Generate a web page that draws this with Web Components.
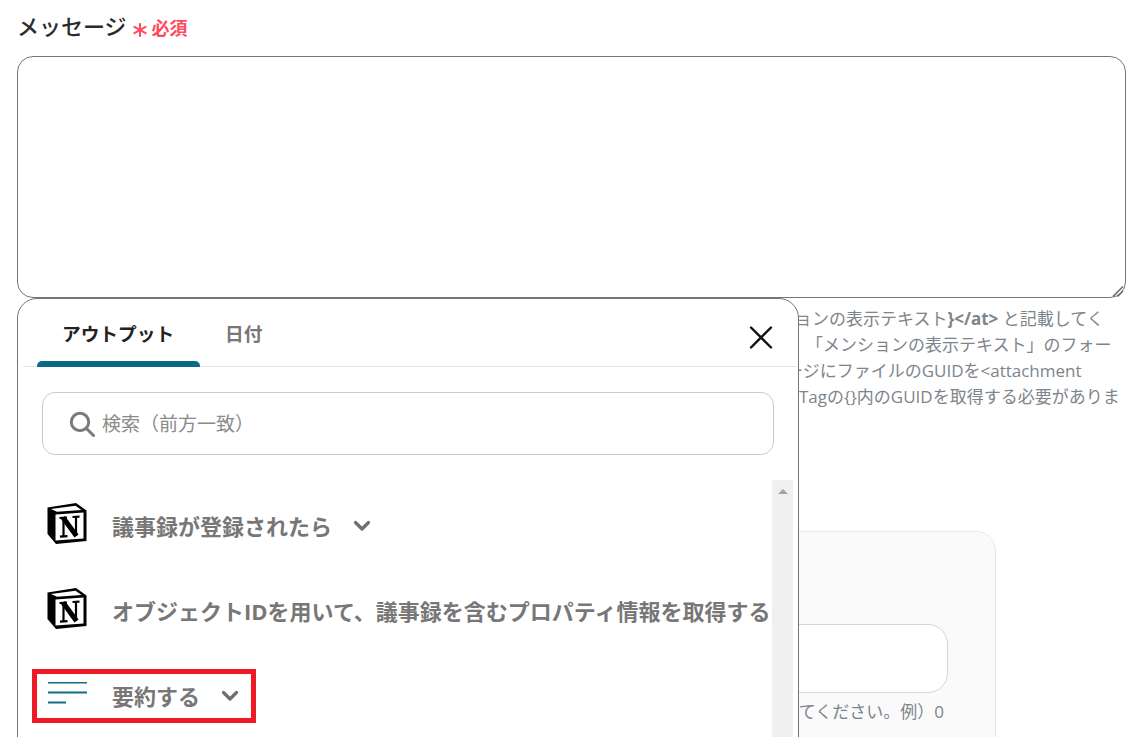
<!DOCTYPE html>
<html lang="ja"><head><meta charset="utf-8">
<style>
html,body{margin:0;height:100%;overflow:hidden;background:#fff}
body{font-family:"Open Sans","Noto Sans CJK JP",sans-serif}
</style></head>
<body>
<form-page>
  <field-label slot="label">メッセージ</field-label>
  <message-box slot="box"></message-box>
  <help-note slot="help">
    <span style="margin-left:795px">ョンの表示テキスト<b>}&lt;/at&gt; </b>と記載してく</span>
    <span style="margin-left:806px">「メンションの表示テキスト」のフォー</span>
    <span style="margin-left:786px">ージにファイルのGUIDを&lt;attachment</span>
    <span style="margin-left:799px">Tagの{}内のGUIDを取得する必要がありま</span>
  </help-note>
  <number-card slot="card"></number-card>
  <output-popup slot="popup">
    <output-row><notion-logo slot="icon"></notion-logo>議事録が登録されたら<chev-icon slot="chev"></chev-icon></output-row>
    <output-row><notion-logo slot="icon"></notion-logo>オブジェクトIDを用いて、議事録を含むプロパティ情報を取得する</output-row>
    <output-row marked><lines-icon slot="icon"></lines-icon>要約する<chev-icon slot="chev"></chev-icon></output-row>
  </output-popup>
</form-page>
<script>
function def(name, html){
  customElements.define(name, class extends HTMLElement{
    constructor(){super();this.attachShadow({mode:'open'}).innerHTML=html;}
  });
}
const FONT='"Open Sans","Noto Sans CJK JP",sans-serif';
def('form-page',`<style>
:host{display:block;position:relative;height:737px;overflow:hidden;font-family:${FONT}}
.wrap{display:flex;flex-direction:column;padding:11px 15px 0 17px}
</style><div class="wrap"><slot name="label"></slot><slot name="box"></slot><slot name="help"></slot><slot name="card"></slot></div><slot name="popup"></slot>`);
def('field-label',`<style>
:host{display:flex;align-items:center;height:31px;margin-bottom:14px;font-size:22px;font-weight:500;color:#2b2b2b;line-height:31px}
.req{display:flex;align-items:center;color:#ff4b60;font-size:18px;font-weight:700;margin-left:6px;padding-top:3px}
.req svg{margin-right:5px;margin-top:4px}
</style><slot></slot><span class="req"><svg width="14" height="14" viewBox="0 0 15 15"><g stroke="#ff4b60" stroke-width="2.2" stroke-linecap="round"><line x1="7.5" y1="1" x2="7.5" y2="14"/><line x1="1.5" y1="4.2" x2="13.5" y2="10.8"/><line x1="13.5" y1="4.2" x2="1.5" y2="10.8"/></g></svg>必須</span>`);
def('message-box',`<style>
:host{display:block;position:relative;box-sizing:border-box;height:242px;width:1109px;border:1px solid #757575;border-radius:16px;background:#fff}
svg{position:absolute;right:1px;bottom:0}
</style><svg width="13" height="12" viewBox="0 0 13 12"><g stroke="#6a6a6a" fill="none"><line x1="2" y1="11.5" x2="12" y2="1.5" stroke-width="1.6"/><line x1="6.5" y1="11.5" x2="12" y2="6" stroke-width="1.6"/></g></svg>`);
def('help-note',`<style>
:host{display:block;margin:8px 0 0 -17px;font-size:17px;line-height:26px;color:#7d858c;white-space:nowrap}
::slotted(span){display:block}
::slotted(span) {font-weight:400}
</style><slot></slot>`);
def('number-card',`<style>
:host{display:block;box-sizing:border-box;position:relative;margin:121px 0 0 1px;width:978px;height:400px;background:#fafafa;border:1px solid #e9e9ec;border-radius:20px}
.input{box-sizing:border-box;margin:92px 0 0 100px;width:829px;height:69px;background:#fff;border:1px solid #d4d5dc;border-radius:20px}
.hint{font-size:17px;line-height:24px;color:#7d858c;text-align:right;width:925px;margin-top:7px;white-space:nowrap}
</style><div class="input"></div><div class="hint">てください。例）0</div>`);
def('output-popup',`<style>
:host{display:block;position:absolute;left:17px;top:298px;width:782px;height:520px;box-sizing:border-box;background:#fff;border:1px solid #757575;border-radius:20px;overflow:hidden}
.tabs{display:flex;height:68px;box-sizing:border-box;margin:0 1px 0 5px;border-bottom:1px solid #e6e6e6;padding-left:14px;position:relative}
.tab{box-sizing:border-box;height:68px;padding:20px 25px 0;width:163px;font-size:18.7px;line-height:30px;font-weight:700;color:#222;position:relative}
.tab.on::after{content:"";position:absolute;left:0;right:0;bottom:0;height:6px;background:#0a6a85;border-radius:5px 5px 0 0}
.tab.off{width:auto;color:#777}
.close{position:absolute;right:24px;top:27px;width:24px;height:24px}
.search{box-sizing:border-box;margin:25px 24px 0 24px;height:63px;border:1px solid #cbcbcb;border-radius:13px;display:flex;align-items:center;padding-left:26px;color:#8a8a8a;font-size:19px;gap:7px}
.search span{margin-top:-1px}
.list{position:relative;margin-top:25px;height:400px;padding-top:2px}
.sb{position:absolute;left:754px;top:0;width:21px;height:400px;background:#f0f0f0}
.sb i{position:absolute;left:6px;top:9px;width:0;height:0;border:5px solid transparent;border-top:0;border-bottom:5px solid #a3a3a3}
</style>
<div class="tabs"><div class="tab on">アウトプット</div><div class="tab off">日付</div>
<svg class="close" viewBox="0 0 24 24"><g stroke="#111" stroke-width="2.4" stroke-linecap="round"><line x1="2" y1="1.5" x2="22" y2="21.5"/><line x1="22" y1="1.5" x2="2" y2="21.5"/></g></svg></div>
<div class="search"><svg width="26" height="26" viewBox="0 0 26 26" fill="none" stroke="#7a7a7a" stroke-width="3"><circle cx="11" cy="11" r="8.7"/><line x1="17.5" y1="17.5" x2="24.5" y2="24.5" stroke-linecap="round"/></svg><span>検索（前方一致）</span></div>
<div class="list"><slot></slot><div class="sb"><i></i></div></div>`);
def('output-row',`<style>
:host{display:flex;align-items:center;height:85px;padding-left:29px;font-size:22px;font-weight:700;color:#777;white-space:nowrap;position:relative;box-sizing:border-box}
:host([marked])::after{content:"";position:absolute;left:14px;top:17px;width:224px;height:54px;box-sizing:border-box;border:5px solid #ed1c24}
.ic{display:flex;width:65px;flex:none;margin-top:-3px}
.c{display:flex;margin-left:21px;margin-top:2px}
:host([marked]) .ic{margin-top:-4px}
</style><span class="ic"><slot name="icon"></slot></span><slot></slot><span class="c"><slot name="chev"></slot></span>`);
def('chev-icon',`<style>:host{display:block;height:12px}svg{display:block}</style><svg width="18" height="12" viewBox="0 0 18 12" fill="none" stroke="#6f6f6f" stroke-width="3.2" stroke-linecap="round" stroke-linejoin="round"><polyline points="2.5,2.5 9,9 15.5,2.5"/></svg>`);
def('notion-logo',`<style>:host{display:block;width:40px;height:41px}svg{display:block}</style><svg width="40" height="41" viewBox="0 0 40 41">
<polygon points="0.5,4.5 29,0 39.5,7.5 39.5,38 9,41 0.5,31" fill="#000"/>
<polygon points="4,6 28.5,2.8 34.5,7 10,8.8" fill="#fff"/>
<polygon points="8.5,11.5 36.5,9.5 36.5,35.5 8.5,37.5" fill="#fff"/>
<g stroke="#000" fill="none"><line x1="16.5" y1="15" x2="16.5" y2="33" stroke-width="2.2"/><line x1="29" y1="14" x2="29" y2="33" stroke-width="2.2"/><line x1="16" y1="14.5" x2="29.5" y2="33" stroke-width="5"/><line x1="12.5" y1="15" x2="20" y2="14.6" stroke-width="2.2"/><line x1="25.5" y1="14" x2="32.5" y2="13.6" stroke-width="2.2"/><line x1="13" y1="33.6" x2="20.5" y2="33.2" stroke-width="2.2"/></g></svg>`);
def('lines-icon',`<style>:host{display:block;width:40px;height:24px}svg{display:block}</style><svg width="40" height="24" viewBox="0 0 40 24"><g fill="#0f6d8a"><rect x="1" y="1" width="39" height="1.5"/><rect x="1" y="10.5" width="39" height="2"/><rect x="1" y="20.5" width="18" height="2"/></g></svg>`);
</script>
</body></html>
